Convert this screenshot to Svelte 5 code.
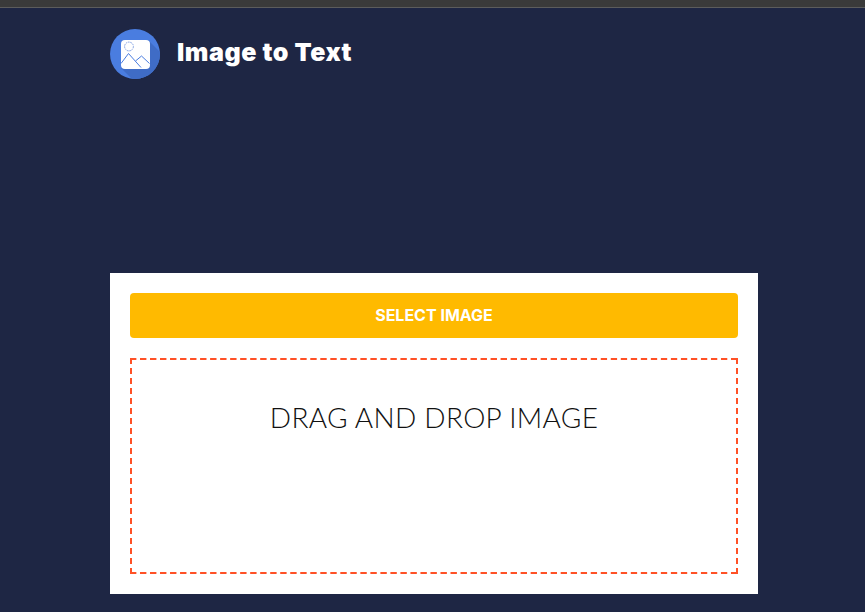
<script>
  const title = 'Image to Text';
</script>

<div class="page">
  <div class="chrome"></div>
  <header class="header">
    <svg class="logo" viewBox="0 0 50 50" aria-hidden="true">
      <defs>
        <clipPath id="disc"><circle cx="25" cy="25" r="25" /></clipPath>
      </defs>
      <circle cx="25" cy="25" r="25" fill="#4a7de0" />
      <path d="M38 11 L60 33 L60 60 L32 60 L11 39 Z" fill="#3f6cc6" clip-path="url(#disc)" />
      <rect x="11" y="11" width="29" height="29" rx="4" fill="#fff" />
      <circle cx="19" cy="17.5" r="4.4" fill="none" stroke="#7f9fe2" stroke-width="1" stroke-dasharray="1.6 0.8" />
      <path d="M11 34.5 L18.5 24.5 L31 38.5 M25.5 32 L31.5 27 L39.5 34.5" fill="none" stroke="#4a7de0" stroke-width="1" />
    </svg>
    <h1 class="title">{title}</h1>
  </header>
  <main class="card">
    <button class="select" type="button">SELECT IMAGE</button>
    <div class="drop">DRAG AND DROP IMAGE</div>
  </main>
</div>

<style>
  :global(body) {
    margin: 0;
    background: #1e2644;
  }
  .page {
    height: 612px;
    overflow: hidden;
    background: #1e2644;
    font-family: "Inter", "Liberation Sans", sans-serif;
  }
  .chrome {
    height: 7px;
    background: #3a3a3a;
    border-bottom: 1px solid #5c5c5c;
  }
  .header {
    display: flex;
    align-items: center;
    gap: 17px;
    height: 50px;
    margin: 21px 0 194px 110px;
  }
  .logo {
    width: 50px;
    height: 50px;
    display: block;
  }
  .title {
    margin: 0 0 5px;
    color: #fff;
    font-size: 25px;
    font-weight: 900;
    letter-spacing: 0.55px;
  }
  .card {
    box-sizing: border-box;
    width: 648px;
    height: 321px;
    margin-left: 110px;
    padding: 20px;
    background: #fff;
    display: flex;
    flex-direction: column;
    gap: 20px;
  }
  .select {
    height: 45px;
    border: 0;
    border-radius: 4px;
    background: #ffba00;
    color: #fff;
    font-family: inherit;
    font-size: 16px;
    font-weight: 700;
    padding: 0 0 1px;
  }
  .drop {
    height: 216px;
    box-sizing: border-box;
    padding-top: 42px;
    text-align: center;
    color: #111;
    font-family: "Lato", "Liberation Sans", sans-serif;
    font-size: 28px;
    font-weight: 300;
    line-height: 34px;
    letter-spacing: 0.3px;
    background-image:
      linear-gradient(90deg, #ff5126 6px, transparent 6px),
      linear-gradient(90deg, #ff5126 6px, transparent 6px),
      linear-gradient(180deg, #ff5126 6px, transparent 6px),
      linear-gradient(180deg, #ff5126 6px, transparent 6px);
    background-size: 10.03px 2px, 10.03px 2px, 2px 10px, 2px 10px;
    background-position: left top, left bottom, left top, right top;
    background-repeat: repeat-x, repeat-x, repeat-y, repeat-y;
  }
</style>
